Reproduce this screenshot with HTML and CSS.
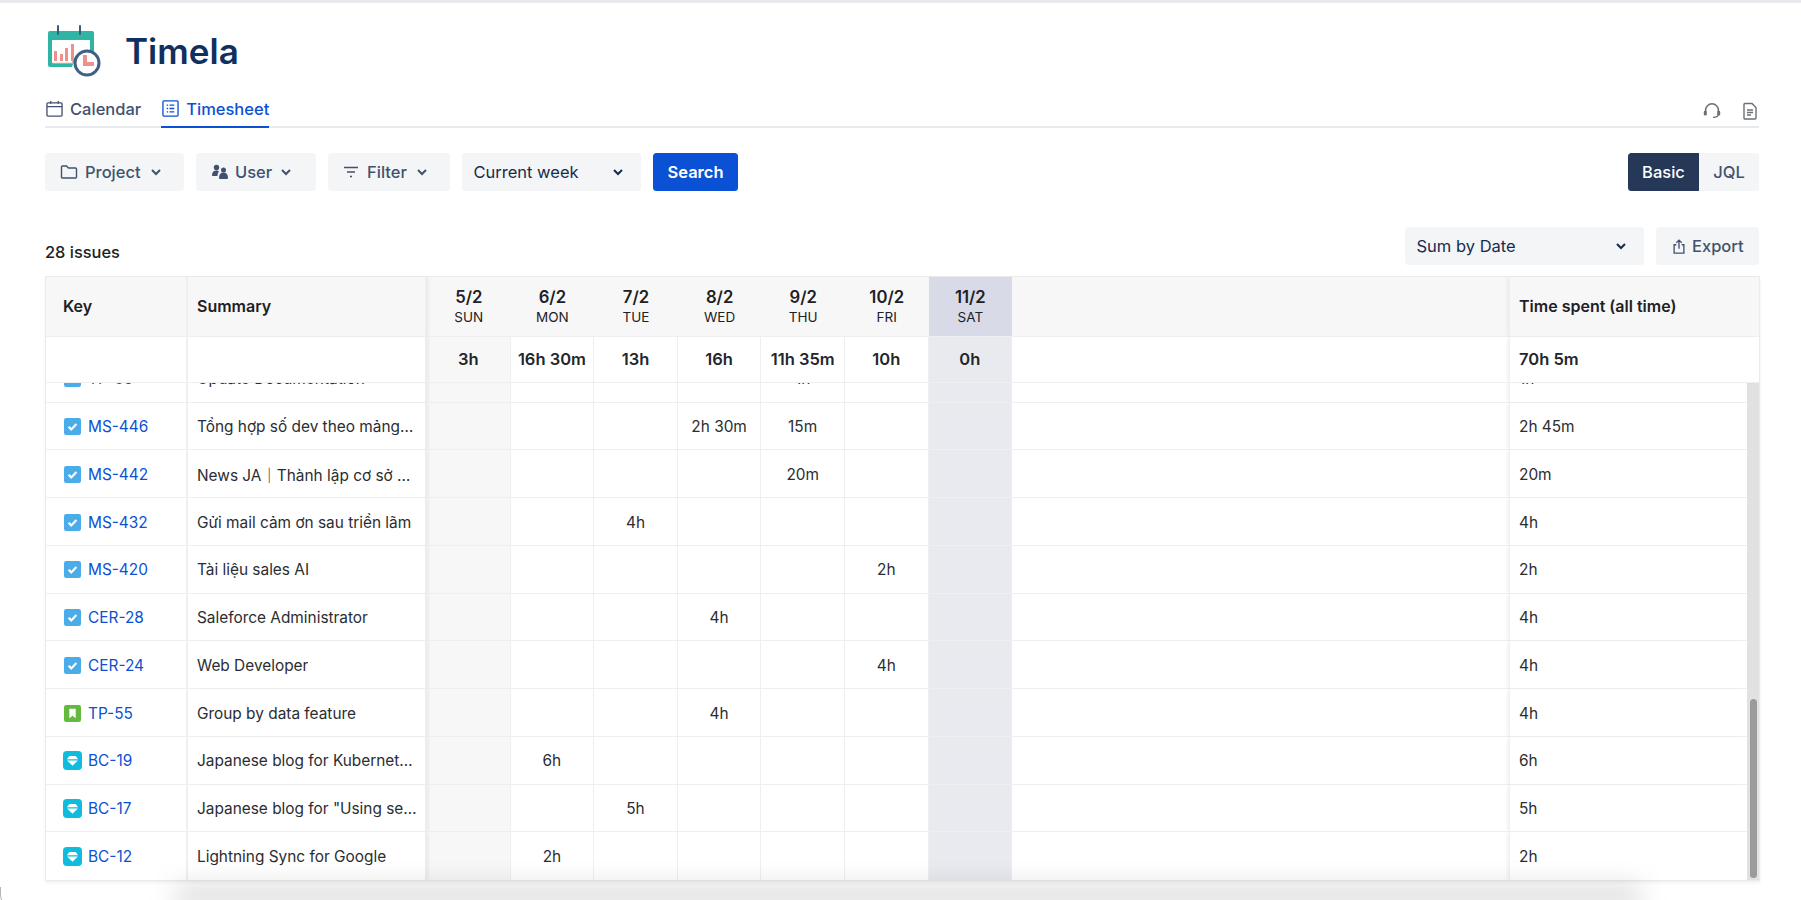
FILE: index.html
```html
<!DOCTYPE html>
<html lang="en">
<head>
<meta charset="utf-8">
<title>Timela</title>
<link rel="stylesheet" href="styles.css">
</head>
<body>
<div class="page">
  <header class="brand">
    <svg class="logo" viewBox="0 0 56 52">
      <path d="M2 8a2 2 0 0 1 2-2h42a2 2 0 0 1 2 2v24H36a12 12 0 0 0-10 10H4a2 2 0 0 1-2-2z" fill="#2fb5a4"/>
      <path d="M44 15v14h-8a12 12 0 0 0-10 9H6V15z" fill="#fff"/>
      <path d="M12 1v8M34 1v8" stroke="#3d5a80" stroke-width="2" stroke-linecap="round"/>
      <path d="M8 26h3v10H8zM14 29h3v7h-3zM19 23h3v13h-3zM25 19h3v17h-3z" fill="#f0908c"/>
      <path d="M7 38h24" stroke="#f6c4c1" stroke-width="1"/>
      <circle cx="41" cy="38" r="12" fill="#fff" stroke="#3f5f85" stroke-width="3"/>
      <path d="M37 30h4v7h7v4H37z" fill="#f0908c"/>
    </svg>
    <h1 class="title">Timela</h1>
  </header>

  <nav class="tabs">
    <a class="tab">
      <svg class="tab-icon" viewBox="0 0 18 18" fill="none" stroke="currentColor" stroke-width="1.4"><rect x="1" y="3" width="16" height="14" rx="1"/><path d="M1 7h16M5 1v3M13 1v3"/></svg>
      Calendar
    </a>
    <a class="tab tab-active">
      <svg class="tab-icon" viewBox="0 0 18 18" fill="none" stroke="currentColor" stroke-width="1.4"><rect x="1" y="1" width="16" height="16" rx="1"/><path d="M5 5.5h1.5M8 5.5h5M5 9h1.5M8 9h5M5 12.5h1.5M8 12.5h5"/></svg>
      Timesheet
    </a>
    <div class="tab-tools">
      <svg class="tool-icon" viewBox="0 0 18 18" fill="none" stroke="#6b6f76" stroke-width="1.5"><path d="M2.6 10V8.200a6.400 6.400 0 0 1 12.800 0V10"/><path d="M15.400 12c0 2-1.500 3.300-5.400 3.300" stroke-width="1.300"/><rect x=".8" y="8.800" width="3" height="4.700" rx="1.300" fill="#6b6f76" stroke="none"/><rect x="14.200" y="8.800" width="3" height="4.700" rx="1.300" fill="#6b6f76" stroke="none"/></svg>
      <svg class="tool-icon" viewBox="0 0 18 18" fill="none" stroke="#6b6f76" stroke-width="1.4"><path d="M3 2.500a1 1 0 0 1 1-1h7l4 4v10.500a1 1 0 0 1-1 1H4a1 1 0 0 1-1-1z"/><path d="M6 8h6M6 10.500h6M6 13h4"/></svg>
    </div>
  </nav>

  <section class="filters">
    <button class="btn btn-project">
      <svg class="btn-icon" viewBox="0 0 18 18" fill="none" stroke="currentColor" stroke-width="1.4"><path d="M1.500 4a1 1 0 0 1 1-1h4l2 2h7a1 1 0 0 1 1 1v8a1 1 0 0 1-1 1h-13a1 1 0 0 1-1-1z"/></svg>
      Project
      <svg class="chev" viewBox="0 0 12 8"><path d="M2 2l4 4 4-4" fill="none" stroke="currentColor" stroke-width="2"/></svg>
    </button>
    <button class="btn btn-user">
      <svg class="btn-icon" viewBox="0 0 18 18" fill="currentColor"><circle cx="5.500" cy="4.500" r="2.700"/><circle cx="12.500" cy="7" r="2.500"/><path d="M1 12.500c0-3.500 1.500-5 4.500-5 1 0 2 .2 2.500.7-1 1.300-1.500 2.800-1.500 4.800H2a1 1 0 0 1-1-.5z"/><path d="M8 15c0-3.500 1.500-5.500 4.500-5.500S17 11.500 17 15a1 1 0 0 1-1 1H9a1 1 0 0 1-1-1z"/></svg>
      User
      <svg class="chev" viewBox="0 0 12 8"><path d="M2 2l4 4 4-4" fill="none" stroke="currentColor" stroke-width="2"/></svg>
    </button>
    <button class="btn btn-filter">
      <svg class="btn-icon" viewBox="0 0 18 18" fill="none" stroke="currentColor" stroke-width="1.4"><path d="M2 4.500h14M5 9h8M8 13.500h2"/></svg>
      Filter
      <svg class="chev" viewBox="0 0 12 8"><path d="M2 2l4 4 4-4" fill="none" stroke="currentColor" stroke-width="2"/></svg>
    </button>
    <button class="btn btn-select btn-week">
      Current week
      <svg class="chev" viewBox="0 0 12 8"><path d="M2 2l4 4 4-4" fill="none" stroke="currentColor" stroke-width="2"/></svg>
    </button>
    <button class="btn btn-search">Search</button>
    <div class="mode">
      <span class="mode-item mode-on">Basic</span>
      <span class="mode-item">JQL</span>
    </div>
  </section>

  <section class="summary-bar">
    <div class="count">28 issues</div>
    <button class="btn btn-select btn-sum">
      Sum by Date
      <svg class="chev" viewBox="0 0 12 8"><path d="M2 2l4 4 4-4" fill="none" stroke="currentColor" stroke-width="2"/></svg>
    </button>
    <button class="btn btn-export">
      <svg class="btn-icon" viewBox="0 0 18 18" fill="none" stroke="currentColor" stroke-width="1.500"><path d="M6 7H3.500v9.500h11V7H12M9 11.500V2M6 4.800L9 1.800l3 3"/></svg>
      Export
    </button>
  </section>

  <section class="sheet">
    <div class="row row-head">
      <div class="cell cell-key head-cell">Key</div>
      <div class="cell cell-sum head-cell">Summary</div>
      <div class="cell cell-day cell-sun day-head"><b>5/2</b><span>SUN</span></div>
      <div class="cell cell-day day-head"><b>6/2</b><span>MON</span></div>
      <div class="cell cell-day day-head"><b>7/2</b><span>TUE</span></div>
      <div class="cell cell-day day-head"><b>8/2</b><span>WED</span></div>
      <div class="cell cell-day day-head"><b>9/2</b><span>THU</span></div>
      <div class="cell cell-day day-head"><b>10/2</b><span>FRI</span></div>
      <div class="cell cell-day day-head head-sat"><b>11/2</b><span>SAT</span></div>
      <div class="cell cell-gap"></div>
      <div class="cell cell-total head-cell">Time spent (all time)</div>
    </div>
    <div class="row row-totals">
      <div class="cell cell-key"></div>
      <div class="cell cell-sum"></div>
      <div class="cell cell-day cell-sun">3h</div>
      <div class="cell cell-day">16h 30m</div>
      <div class="cell cell-day">13h</div>
      <div class="cell cell-day">16h</div>
      <div class="cell cell-day">11h 35m</div>
      <div class="cell cell-day">10h</div>
      <div class="cell cell-day cell-sat">0h</div>
      <div class="cell cell-gap"></div>
      <div class="cell cell-total">70h 5m</div>
    </div>
    <div class="body">
      <div class="rows" id="rows"></div>
      <div class="scrollbar"><div class="thumb"></div></div>
    </div>
  </section>
</div>

<template id="icon-task"><svg class="issue" viewBox="0 0 16 16"><rect width="16" height="16" rx="2" fill="#4bade8"/><path d="M4.300 8.200l2.500 2.500 4.900-5" fill="none" stroke="#fff" stroke-width="2"/></svg></template>
<template id="icon-story"><svg class="issue" viewBox="0 0 16 16"><rect width="16" height="16" rx="2" fill="#63ba3c"/><path d="M5 3.500h6v9l-3-2.300-3 2.300z" fill="#fff"/></svg></template>
<template id="icon-gem"><svg class="issue issue-gem" viewBox="0 0 18 18"><rect width="18" height="18" rx="3.500" fill="#10bbdc"/><path d="M6 4.800h6l2.300 3H3.700z" fill="#fff"/><path d="M3.900 8.900h10.200L9 14z" fill="#fff"/></svg></template>

<script src="app.js"></script>
</body>
</html>
```
FILE: app.js
```js
const data = [
  ["task", "TP-56", "Update Documentation", {4: "1h"}, "1h"],
  ["task", "MS-446", "Tổng hợp số dev theo mảng/công nghệ", {3: "2h 30m", 4: "15m"}, "2h 45m"],
  ["task", "MS-442", "News JA｜Thành lập cơ sở mới tại Nhật", {4: "20m"}, "20m"],
  ["task", "MS-432", "Gửi mail cảm ơn sau triển lãm", {2: "4h"}, "4h"],
  ["task", "MS-420", "Tài liệu sales AI", {5: "2h"}, "2h"],
  ["task", "CER-28", "Saleforce Administrator", {3: "4h"}, "4h"],
  ["task", "CER-24", "Web Developer", {5: "4h"}, "4h"],
  ["story", "TP-55", "Group by data feature", {3: "4h"}, "4h"],
  ["gem", "BC-19", "Japanese blog for Kubernetes deployment", {1: "6h"}, "6h"],
  ["gem", "BC-17", "Japanese blog for \"Using serverless\"", {2: "5h"}, "5h"],
  ["gem", "BC-12", "Lightning Sync for Google", {1: "2h"}, "2h"]
];
const root = document.getElementById("rows");
function div(cls, text) {
  const d = document.createElement("div");
  d.className = cls;
  if (text) d.textContent = text;
  return d;
}
for (const [type, key, summary, days, total] of data) {
  const row = div("row row-issue");
  const k = div("cell cell-key");
  k.appendChild(document.getElementById("icon-" + type).content.cloneNode(true));
  const link = document.createElement("a");
  link.className = "issue-key";
  link.textContent = key;
  k.appendChild(link);
  row.appendChild(k);
  const s = div("cell cell-sum");
  s.appendChild(div("ellipsis", summary));
  row.appendChild(s);
  for (let i = 0; i < 7; i++) {
    const extra = i === 0 ? " cell-sun" : i === 6 ? " cell-sat" : "";
    row.appendChild(div("cell cell-day" + extra, days[i]));
  }
  row.appendChild(div("cell cell-gap"));
  row.appendChild(div("cell cell-total", total));
  root.appendChild(row);
}
```
FILE: styles.css
```css
* { box-sizing: border-box; }
html, body { margin: 0; height: 100%; overflow: hidden; }
body {
  font-family: Inter, "Noto Sans", "Noto Sans CJK JP", sans-serif;
  font-size: 15.400px;
  color: #1d2125;
  background: #fff;
  -webkit-font-smoothing: antialiased;
}
.page {
  width: 1801px;
  height: 900px;
  padding: 0 42px 0 45px;
  border-top: 3px solid #e9eaee;
  position: relative;
  overflow: hidden;
}
/* window drop shadow peeking in along the bottom of the capture */
.page::after {
  content: "";
  position: absolute;
  left: 175px;
  right: 160px;
  bottom: -6px;
  height: 20px;
  background: rgba(0,0,0,.15);
  filter: blur(13px);
  pointer-events: none;
  z-index: 3;
}
/* window corner at the lower left */
.page::before {
  content: "";
  position: absolute;
  left: 0;
  bottom: -10px;
  width: 20px;
  height: 22px;
  border-left: 1px solid #b5b5b5;
  border-bottom: 1px solid #b5b5b5;
  border-bottom-left-radius: 16px;
}

.brand { display: flex; align-items: center; height: 52px; margin-top: 22px; }
.logo { width: 56px; height: 52px; margin-left: 1px; }
.title {
  margin: 0 0 0 23px;
  font-size: 35px;
  font-weight: 600;
  color: #10305f;
}

.tabs {
  display: flex;
  align-items: flex-start;
  height: 28px;
  margin-top: 23px;
  border-bottom: 2px solid #e9eaee;
  position: relative;
}
.tab {
  display: flex;
  align-items: center;
  gap: 7px;
  height: 28px;
  margin-right: 20px;
  padding: 0 0 9px 1px;
  font-size: 16.500px;
  font-weight: 500;
  color: #42526e;
  border-bottom: 2px solid transparent;
}
.tab-active { color: #0b51d5; border-bottom-color: #0b51d5; }
.tab-icon { width: 17px; height: 17px; }
.tab-tools { display: flex; gap: 20px; margin-left: auto; margin-top: 2px; }
.tool-icon { width: 18px; height: 18px; }

.filters { display: flex; align-items: center; gap: 12px; margin-top: 25px; height: 38px; }
.btn {
  display: flex;
  align-items: center;
  height: 38px;
  border: 0;
  border-radius: 3.500px;
  background: #f4f5f7;
  color: #42526e;
  font: 500 16.500px Inter, sans-serif;
  padding: 0 14px;
  gap: 7px;
}
.btn-project { width: 139px; padding-left: 15px; }
.btn-user { width: 120px; padding-left: 15px; gap: 6px; }
.btn-filter { width: 122px; }
.btn-icon { width: 18px; height: 18px; flex: none; }
.chev { width: 12px; height: 8px; flex: none; margin-left: 2px; }
.btn-select { justify-content: space-between; padding: 0 17px 0 11.500px; font-weight: 400; color: #172b4d; }
.btn-week { width: 179px; }
.btn-search { width: 85px; justify-content: center; background: #0b51d5; color: #fff; font-weight: 600; }
.mode { display: flex; margin-left: auto; height: 38px; border-radius: 3.500px; overflow: hidden; background: #f4f5f7; font-weight: 500; font-size: 16.500px; }
.mode-item { display: flex; align-items: center; justify-content: center; width: 60px; color: #42526e; }
.mode-on { width: 71px; background: #253858; color: #fff; }

.summary-bar { display: flex; align-items: center; gap: 12px; margin-top: 36px; height: 38px; }
.count { margin-right: auto; font-size: 16.400px; font-weight: 500; margin-top: 11px; color: #1d2125; }
.btn-sum { width: 239px; }
.btn-export { width: 103px; padding: 0 14px 0 15px; gap: 5px; }
.btn-export .btn-icon { width: 16px; height: 17px; }

.sheet {
  margin-top: 11px;
  width: 1715px;
  height: 605px;
  border: 1px solid #ebebeb;
  box-shadow: 0 2px 3px rgba(0,0,0,.06);
  display: flex;
  flex-direction: column;
  background: #fff;
}
.row {
  display: grid;
  grid-template-columns: 142px 239px repeat(7, 83.600px) 1fr 250px;
  flex: none;
}
.cell { display: flex; align-items: center; min-width: 0; border-bottom: 1.500px solid #efefef; border-right: 1.500px solid #efefef; }
.cell-key { border-right-width: 2.500px; padding-left: 17px; }
.cell-sum { padding-left: 9px; padding-right: 8px; box-shadow: 3px 0 3px -1px rgba(0,0,0,.05); z-index: 1; border-right: 2.500px solid #ededed; }
.cell-day { justify-content: center; }
.cell-gap { border-right: 0; }
.cell-total { padding-left: 9px; border-right: 0; box-shadow: -3px 0 3px -1px rgba(0,0,0,.05); z-index: 1; border-left: 1.500px solid #efefef; }

.row-head { height: 59.500px; background: #f7f7f7; font-weight: 600; font-size: 16px; color: #1d2125; }
.head-cell { font-weight: 600; }
.day-head { flex-direction: column; line-height: 1; gap: 6px; border-right: 0; padding-top: 1px; }
.day-head b { font-size: 16.700px; font-weight: 600; }
.day-head span { font-size: 13.500px; font-weight: 400; }
.head-sat { background: #d8dae8; }

.row-totals { height: 46.500px; font-weight: 600; font-size: 16.500px; background: #fff; color: #23262b; }
.row-totals .cell-sun { background: #f7f7f7; }
.cell-sat { background: #e9eaf0; }

.body { flex: 1; min-height: 0; display: flex; overflow: hidden; }
.rows { flex: 1; min-width: 0; display: flex; flex-direction: column; justify-content: flex-end; overflow: hidden; }
.row-issue { height: 47.750px; grid-template-columns: 142px 239px repeat(7, 83.600px) 1fr 238px; color: #2a2d31; }
.row-issue .cell { padding-top: 1.500px; }
.row-issue .cell-sun { background: #f7f7f7; }
.row-issue:last-child .cell { border-bottom: 0; }
.issue { width: 17px; height: 17px; flex: none; margin-left: 1px; }
.issue-gem { width: 19px; height: 19px; margin-left: 0; margin-right: -1px; }
.issue-key { margin-left: 7px; color: #0b51d5; }
.ellipsis { white-space: nowrap; overflow: hidden; text-overflow: ellipsis; }

.scrollbar { width: 12px; flex: none; background: #e1e1e1; padding: 0 2.500px 2px; display: flex; flex-direction: column; justify-content: flex-end; }
.thumb { height: 179px; background: #9b9b9b; border-radius: 4px; }
```
